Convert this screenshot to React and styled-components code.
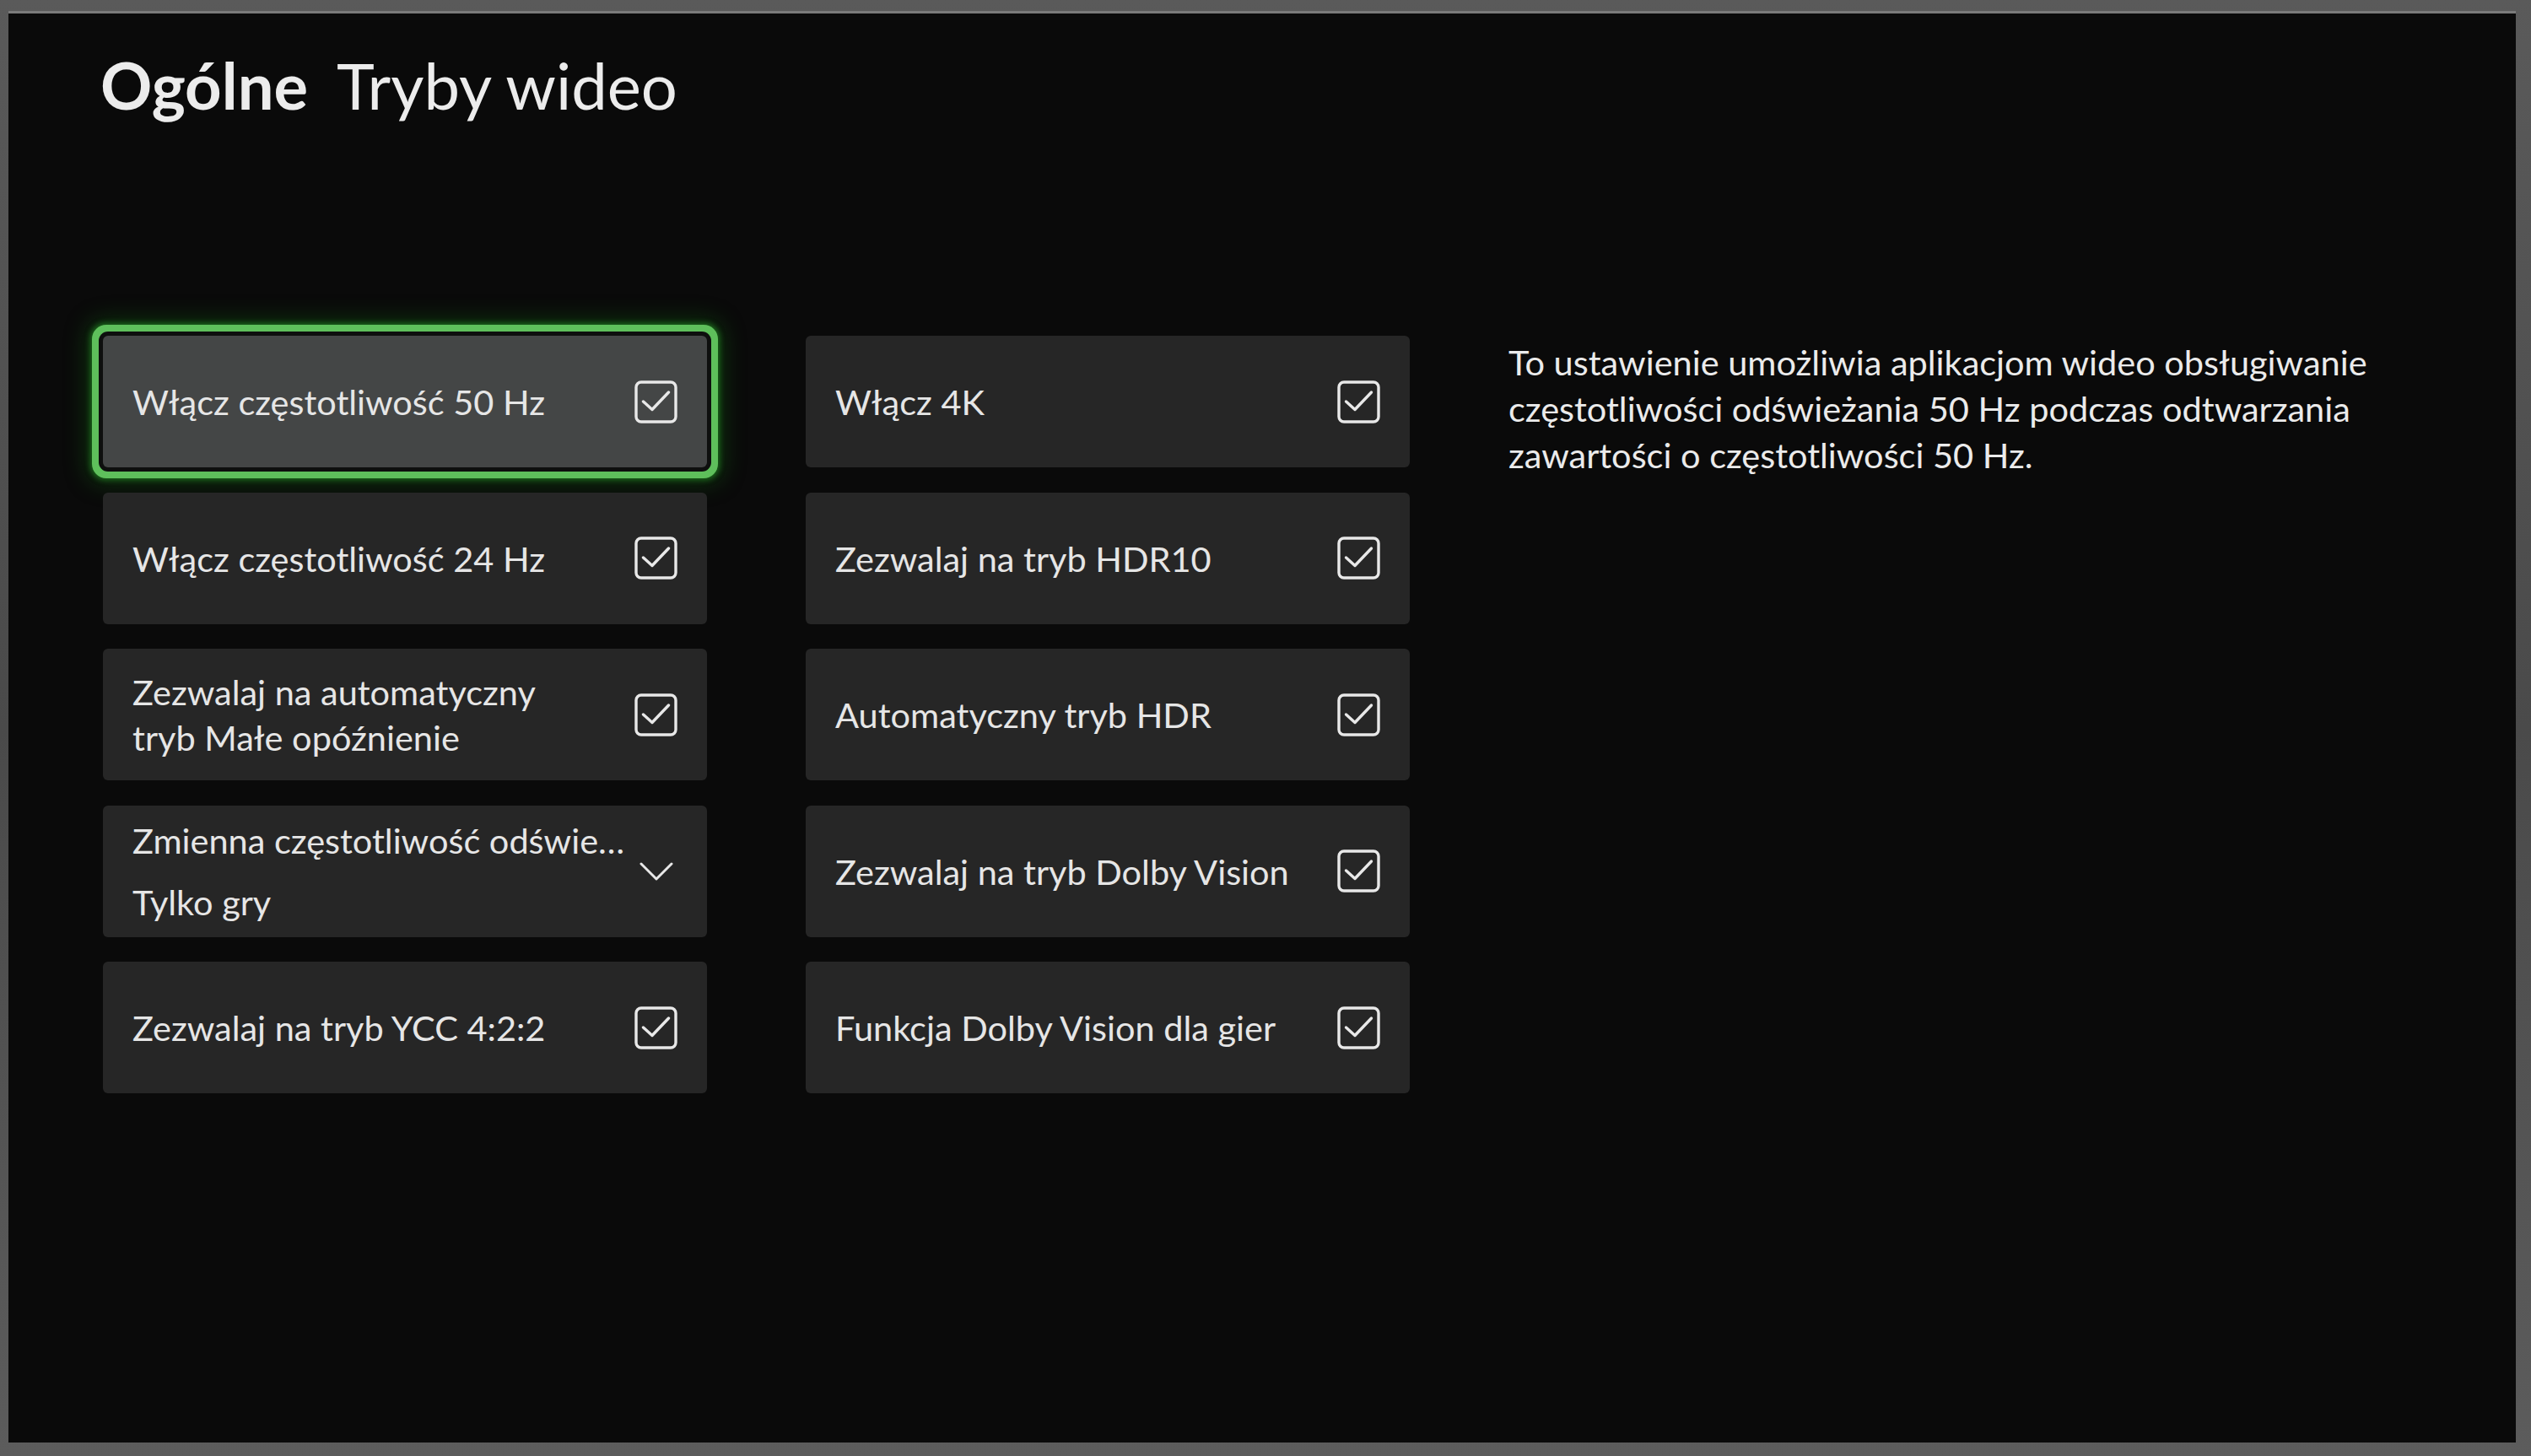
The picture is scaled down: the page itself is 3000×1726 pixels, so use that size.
import React from 'react'
import styled, { createGlobalStyle, css } from 'styled-components'

const GlobalStyle = createGlobalStyle`
  html, body {
    margin: 0;
    padding: 0;
    background: #4d4d4d;
  }
  * {
    box-sizing: border-box;
  }
`

const Frame = styled.div`
  width: 3000px;
  height: 1726px;
  padding: 13px 18px 16px 10px;
  background: linear-gradient(180deg, #5a5a5a 0%, #4a4a4a 50%, #5c5c5c 100%);
  display: flex;
`

const Display = styled.main`
  flex: 1;
  background: #0a0a0a;
  border-top: 3px solid #7a7a7a;
  padding: 47px 0 0 109px;
  font-family: Lato, "Open Sans", sans-serif;
  color: #e6e6e6;
  display: flex;
  flex-direction: column;
`

const Title = styled.h1`
  margin: 0;
  font-size: 76px;
  line-height: 76px;
  font-weight: 400;
  color: #ececec;
  display: flex;
  gap: 34px;
`

const Strong = styled.span`
  font-weight: 700;
`

const Content = styled.div`
  margin-top: 259px;
  margin-left: 3px;
  display: grid;
  grid-template-columns: 716px 716px 1080px;
  column-gap: 117px;
  align-items: start;
`

const Column = styled.div`
  display: flex;
  flex-direction: column;
  gap: 29.5px;
`

const Card = styled.div`
  height: 156px;
  padding: 0 35px;
  border-radius: 6px;
  background: #262626;
  display: flex;
  align-items: center;
  justify-content: space-between;
  gap: 6px;

  ${p => p.$focused && css`
    background: #444646;
    box-shadow:
      0 0 0 5px #0e0f0e,
      0 0 0 13px #5ebf5b,
      0 0 6px 15px rgba(40, 150, 40, 0.6),
      0 0 28px 18px rgba(20, 120, 20, 0.4);
  `}
`

const Label = styled.div`
  font-size: 41.5px;
  line-height: 54px;
  min-width: 0;
`

const Stack = styled.div`
  display: flex;
  flex-direction: column;
  gap: 19px;
  min-width: 0;
`

const Heading = styled(Label)`
  white-space: nowrap;
  overflow: hidden;
  text-overflow: ellipsis;
`

const Slot = styled.div`
  width: 51px;
  flex: none;
  display: flex;
  justify-content: center;
  align-items: center;
  color: #e8e8e8;
`

const Description = styled.p`
  margin: 4px 0 0;
  font-size: 41.5px;
  line-height: 55px;
  color: #ebebeb;
  white-space: nowrap;
`

function CheckIcon() {
  return (
    <svg width="51" height="51" viewBox="0 0 51 51" fill="none" stroke="currentColor" strokeWidth="3.4" strokeLinecap="round" strokeLinejoin="round">
      <rect x="2" y="2" width="47" height="47" rx="6" />
      <path d="M10.5 25 L21 34.5 L40.5 14" />
    </svg>
  )
}

function ChevronIcon() {
  return (
    <svg width="40" height="22" viewBox="0 0 40 22" fill="none" stroke="currentColor" strokeWidth="3" strokeLinecap="round" strokeLinejoin="round">
      <path d="M2 2 L20 20 L38 2" />
    </svg>
  )
}

function CheckCard({ label, focused }) {
  return (
    <Card $focused={focused}>
      <Label>{label}</Label>
      <Slot><CheckIcon /></Slot>
    </Card>
  )
}

function DropdownCard({ label, value }) {
  return (
    <Card>
      <Stack>
        <Heading>{label}</Heading>
        <Label>{value}</Label>
      </Stack>
      <Slot><ChevronIcon /></Slot>
    </Card>
  )
}

export default function App() {
  return (
    <>
      <GlobalStyle />
      <Frame>
        <Display>
          <Title>
            <Strong>Ogólne</Strong>
            <span>Tryby wideo</span>
          </Title>
          <Content>
            <Column>
              <CheckCard focused label="Włącz częstotliwość 50 Hz" />
              <CheckCard label="Włącz częstotliwość 24 Hz" />
              <CheckCard label={<>Zezwalaj na automatyczny<br />tryb Małe opóźnienie</>} />
              <DropdownCard label="Zmienna częstotliwość odświeżania" value="Tylko gry" />
              <CheckCard label="Zezwalaj na tryb YCC 4:2:2" />
            </Column>
            <Column>
              <CheckCard label="Włącz 4K" />
              <CheckCard label="Zezwalaj na tryb HDR10" />
              <CheckCard label="Automatyczny tryb HDR" />
              <CheckCard label="Zezwalaj na tryb Dolby Vision" />
              <CheckCard label="Funkcja Dolby Vision dla gier" />
            </Column>
            <Description>
              To ustawienie umożliwia aplikacjom wideo obsługiwanie<br />
              częstotliwości odświeżania 50 Hz podczas odtwarzania<br />
              zawartości o częstotliwości 50 Hz.
            </Description>
          </Content>
        </Display>
      </Frame>
    </>
  )
}
